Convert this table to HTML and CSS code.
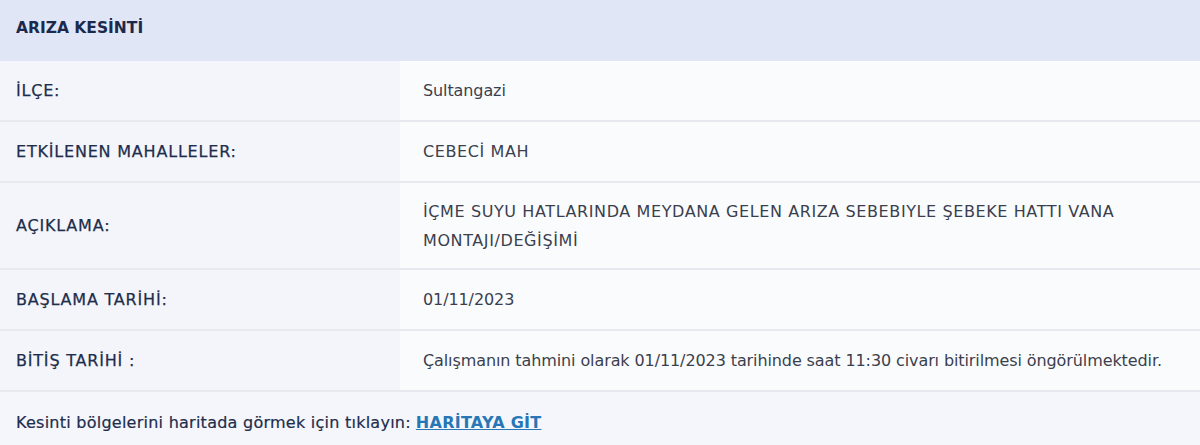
FILE: index.html
```html
<!DOCTYPE html>
<html lang="tr">
<head>
  <meta charset="UTF-8">
  <meta name="viewport" content="width=device-width, initial-scale=1.0">
  <title>Arıza Kesinti</title>
  <link rel="stylesheet" href="styles.css">
</head>
<body>
  <div class="outage">
    <div class="outage-head">ARIZA KESİNTİ</div>
    <div class="row">
      <div class="label">İLÇE:</div>
      <div class="value">Sultangazi</div>
    </div>
    <div class="row">
      <div class="label">ETKİLENEN MAHALLELER:</div>
      <div class="value caps">CEBECİ MAH</div>
    </div>
    <div class="row tall">
      <div class="label">AÇIKLAMA:</div>
      <div class="value caps">İÇME SUYU HATLARINDA MEYDANA GELEN ARIZA SEBEBIYLE ŞEBEKE HATTI VANA<br>MONTAJI/DEĞİŞİMİ</div>
    </div>
    <div class="row">
      <div class="label">BAŞLAMA TARİHİ:</div>
      <div class="value">01/11/2023</div>
    </div>
    <div class="row">
      <div class="label">BİTİŞ TARİHİ :</div>
      <div class="value">Çalışmanın tahmini olarak 01/11/2023 tarihinde saat 11:30 civarı bitirilmesi öngörülmektedir.</div>
    </div>
    <div class="outage-foot">
      Kesinti bölgelerini haritada görmek için tıklayın: <a href="#">HARİTAYA GİT</a>
    </div>
  </div>
</body>
</html>
```

FILE: styles.css
```css
body {
  margin: 0;
  font-family: "DejaVu Sans", "Noto Sans", sans-serif;
  font-size: 16px;
  background: #f4f6fb;
}
.outage {
  width: 1200px;
}
.outage-head {
  height: 61px;
  display: flex;
  align-items: center;
  padding-left: 16px;
  padding-bottom: 6px;
  box-sizing: border-box;
  background: #e0e6f6;
  color: #1b2a4c;
  font-weight: 700;
  font-size: 15.5px;
}
.row {
  display: flex;
  min-height: 61px;
  border-bottom: 2px solid #e6e9ef;
  box-sizing: border-box;
}
.row.tall {
  min-height: 87px;
}
.label {
  width: 400px;
  flex-shrink: 0;
  display: flex;
  align-items: center;
  padding-left: 16px;
  box-sizing: border-box;
  background: #f3f5fa;
  color: #1e2d4c;
  letter-spacing: 0.8px;
  -webkit-text-stroke: 0.25px #1e2d4c;
}
.value {
  flex: 1;
  display: flex;
  align-items: center;
  padding-left: 23px;
  background: #fafbfd;
  color: #3a3f4d;
  line-height: 29px;
  letter-spacing: -0.1px;
}
.value.caps {
  letter-spacing: 0.6px;
}
.outage-foot {
  height: 60px;
  display: flex;
  align-items: center;
  padding-left: 16px;
  color: #1e2d4c;
  background: #f4f6fb;
  letter-spacing: 0.25px;
  -webkit-text-stroke: 0.2px #1e2d4c;
}
.outage-foot a {
  margin-left: 5px;
  color: #2776b6;
  font-weight: 700;
  text-decoration: underline;
  -webkit-text-stroke: 0;
}
```
